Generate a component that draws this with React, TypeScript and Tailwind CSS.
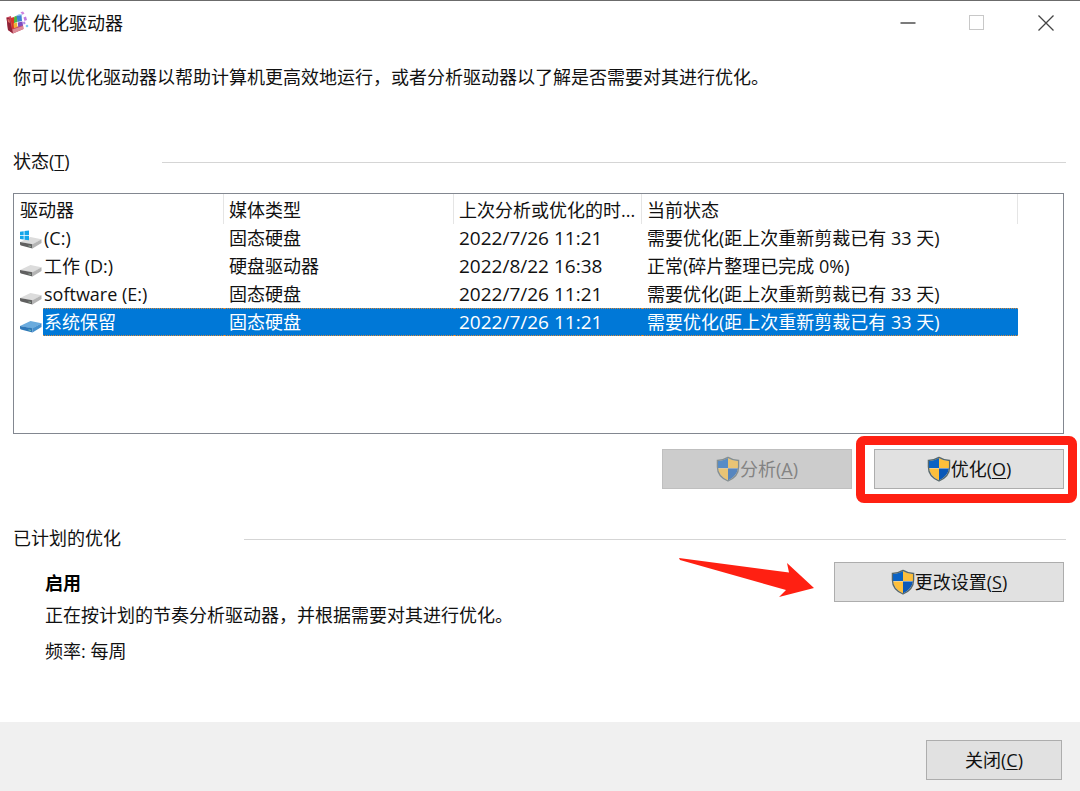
import { useState } from "react";
import type { ReactNode } from "react";

type DriveKind = "windows" | "plain" | "selected";

interface Drive {
  name: string;
  kind: DriveKind;
  media: string;
  lastRun: string;
  status: string;
}

const DRIVES: Drive[] = [
  { name: "(C:)", kind: "windows", media: "固态硬盘", lastRun: "2022/7/26 11:21", status: "需要优化(距上次重新剪裁已有 33 天)" },
  { name: "工作 (D:)", kind: "plain", media: "硬盘驱动器", lastRun: "2022/8/22 16:38", status: "正常(碎片整理已完成 0%)" },
  { name: "software (E:)", kind: "plain", media: "固态硬盘", lastRun: "2022/7/26 11:21", status: "需要优化(距上次重新剪裁已有 33 天)" },
  { name: "系统保留", kind: "plain", media: "固态硬盘", lastRun: "2022/7/26 11:21", status: "需要优化(距上次重新剪裁已有 33 天)" },
];

function AppIcon() {
  return (
    <svg width="23" height="24" viewBox="0 0 23 24" aria-hidden="true">
      <path d="M0.5 6.5 L5 5 L6 17 L17 14 L17.5 18 L7 22.5 L2 19 Z" fill="#c8475c" />
      <path d="M0.5 6.5 L3.5 7.5 L6.500 20 L7 22.500 L2 19 Z" fill="#8e2338" />
      <path d="M1.500 8 L3.500 8.500 L4 12 L2 11 Z" fill="#e0695f" />
      <path d="M4.500 7 L8 6 L8.500 17 L6 18 Z" fill="#d8352a" />
      <path d="M8 7 Q8 5 10 5 L11.500 5.500 V11 L8 12 Z" fill="#52b63f" />
      <path d="M10.500 4.500 L15.500 4 L16 10 L11.500 11 Z" fill="#3d82d2" />
      <path d="M10.500 4.500 L13 3 L16.500 3.200 L15.500 4.300 Z" fill="#a8d0f4" />
      <path d="M7.500 12.500 L11 11.500 L11.500 16 L8 17 Z" fill="#f0b236" />
      <path d="M11.800 11.500 L16.500 10.500 L17 14.500 L12.200 16 Z" fill="#7e4cc0" />
      <path d="M6.500 18.500 L17 15 L17.500 18 L7 22.500 Z" fill="#dc8c98" />
      <path d="M14.500 1.200 L17 0.600 L18.500 2.500 L16.500 3.800 Z" fill="#cf83df" />
      <path d="M17.500 6.500 L20 5.500 L21 9 L18.500 10 Z" fill="#c07be0" />
      <path d="M17 11 L19 10.500 L19.500 13 L17.500 13.500 Z" fill="#b28ae6" />
      <circle cx="21" cy="15" r="1.300" fill="#7cc8f0" />
    </svg>
  );
}

function DriveIcon({ kind }: { kind: DriveKind }) {
  const blue = kind === "selected";
  return (
    <svg width="22" height="22" viewBox="0 0 22 22" className="shrink-0" aria-hidden="true">
      <path d="M0 15 L10.500 10 L21.500 12.200 L12.500 17.500 Z" fill={blue ? "#6aabde" : "#dcdcdc"} />
      <path d="M0 15 L12.500 17.200 V21.500 L1 18.500 Q0 18 0 17 Z" fill={blue ? "#2f77b8" : "#606060"} />
      <path d="M12.500 17.200 L21.500 12.200 V16 L12.500 21.500 Z" fill={blue ? "#4690cd" : "#b4b4b4"} />
      <path d="M8.500 18.500 L11 19 V19.800 L8.500 19.300 Z" fill={blue ? "#82dcb0" : "#9dbaa5"} />
      {kind === "windows" && (
        <path
          d="M0 4.700 L3.700 4.200 V8 H0 Z M4.500 4.100 L9 3.500 V8 H4.500 Z M0 8.800 H3.700 V12.600 L0 12.100 Z M4.500 8.800 H9 V13.300 L4.500 12.700 Z"
          fill="#13a6ea"
        />
      )}
    </svg>
  );
}

function Shield() {
  return (
    <svg width="24" height="26" viewBox="0 0 24 26" className="shrink-0" aria-hidden="true">
      <path d="M12 2 Q7 5 2 5 V12 H12 Z" fill="#0a62c4" />
      <path d="M12 2 Q17 5 22 5 V12 H12 Z" fill="#fdbf3c" />
      <path d="M2 12.5 H12 V24.5 Q3 20 2 12.5 Z" fill="#fdbf3c" />
      <path d="M22 12.5 H12 V24.5 Q21 20 22 12.5 Z" fill="#0a58b8" />
      <path
        d="M12 1.4 Q7 4.5 1.4 4.5 V11 Q1.4 20.5 12 25 Q22.6 20.5 22.6 11 V4.5 Q17 4.5 12 1.4 Z"
        fill="none"
        stroke="#56676b"
        strokeWidth="1.3"
      />
    </svg>
  );
}

function DialogButton({
  label,
  hotkey,
  shield = false,
  disabled = false,
  size,
}: {
  label: string;
  hotkey: string;
  shield?: boolean;
  disabled?: boolean;
  size: string;
}) {
  return (
    <button
      type="button"
      disabled={disabled}
      className={`flex h-10 items-center justify-center border border-[#adadad] bg-[#e1e1e1] disabled:border-[#bfbfbf] disabled:bg-[#cccccc] disabled:text-[#838383] ${size}`}
    >
      {shield && (
        <span className={disabled ? "opacity-60" : ""}>
          <Shield />
        </span>
      )}
      <span>
        {label}(<u className="underline-offset-2">{hotkey}</u>)
      </span>
    </button>
  );
}

function SectionHeading({ children, size }: { children: ReactNode; size: string }) {
  return (
    <div className="flex items-center pl-[13px] pr-[14px]">
      <h2 className={`shrink-0 ${size}`}>{children}</h2>
      <div className="mt-0.5 h-px flex-1 bg-[#d5d5d5]" />
    </div>
  );
}

function TitleBar() {
  return (
    <header className="flex h-11 items-center">
      <div className="flex flex-1 items-center gap-1 pl-[6px]">
        <AppIcon />
        <h1>优化驱动器</h1>
      </div>
      <button type="button" aria-label="最小化" className="flex h-full w-[69px] items-center justify-center">
        <svg width="16" height="16" viewBox="0 0 16 16">
          <path d="M0.5 8 H15.5" stroke="#333" strokeWidth="1.3" />
        </svg>
      </button>
      <button type="button" aria-label="最大化" disabled className="flex h-full w-[69px] items-center justify-center">
        <svg width="16" height="16" viewBox="0 0 16 16">
          <rect x="0.5" y="0.5" width="14" height="14" fill="none" stroke="#c8c8c8" />
        </svg>
      </button>
      <button type="button" aria-label="关闭" className="flex h-full w-[69px] items-center justify-center">
        <svg width="16" height="16" viewBox="0 0 16 16">
          <path d="M0.5 0.5 L15.5 15.5 M15.5 0.5 L0.5 15.5" stroke="#444" strokeWidth="1.3" />
        </svg>
      </button>
    </header>
  );
}

function DriveTable() {
  const [selected, setSelected] = useState(3);
  return (
    <div className="ml-[13px] mr-4 h-[241px] overflow-hidden border border-[#828790]">
      <table className="w-full table-fixed border-separate border-spacing-0 whitespace-nowrap text-left">
        <colgroup>
          <col className="w-[210px]" />
          <col className="w-[230px]" />
          <col className="w-[188px]" />
          <col className="w-[376px]" />
          <col />
        </colgroup>
        <thead>
          <tr className="h-[30px]">
            <th className="border-r border-[#e5e5e5] p-0 pl-[6px] pt-0.5 font-normal">驱动器</th>
            <th className="border-r border-[#e5e5e5] p-0 pl-[5px] pt-0.5 font-normal">媒体类型</th>
            <th className="border-r border-[#e5e5e5] p-0 pl-[5px] pt-0.5 font-normal">上次分析或优化的时...</th>
            <th className="border-r border-[#e5e5e5] p-0 pl-[5px] pt-0.5 font-normal">当前状态</th>
            <td />
          </tr>
        </thead>
        <tbody>
          {DRIVES.map((drive, i) => {
            const active = i === selected;
            const cell = active
              ? "border-y border-dotted border-[#d98a3a] bg-[#0078d7] text-white"
              : "border-y border-transparent";
            return (
              <tr key={drive.name} className="h-7" onClick={() => setSelected(i)}>
                <td className="p-0">
                  <div className="flex h-7 items-center pl-[6px]">
                    <DriveIcon kind={active ? "selected" : drive.kind} />
                    <span className={`ml-px h-7 flex-1 pl-px leading-[26px] ${cell}`}>{drive.name}</span>
                  </div>
                </td>
                <td className={`p-0 pl-[5px] leading-[26px] ${cell}`}>{drive.media}</td>
                <td className={`p-0 pl-[5px] text-[19px] leading-[26px] ${cell}`}>{drive.lastRun}</td>
                <td className={`p-0 pl-[5px] leading-[26px] ${cell}`}>{drive.status}</td>
                <td className="p-0" />
              </tr>
            );
          })}
        </tbody>
      </table>
    </div>
  );
}

export default function App() {
  return (
    <div className="flex min-h-screen flex-col border-t border-[#6b6b6b] bg-white font-['Open_Sans','Noto_Sans_CJK_SC',sans-serif] text-[18px] leading-6 text-[#111]">
      <TitleBar />

      <main className="flex-1 pb-6">
        <p className="mb-[60px] mt-5 px-[13px]">
          你可以优化驱动器以帮助计算机更高效地运行，或者分析驱动器以了解是否需要对其进行优化。
        </p>

        <SectionHeading size="w-[149px]">
          状态(<u className="underline-offset-2">T</u>)
        </SectionHeading>
        <div className="mt-5">
          <DriveTable />
        </div>

        <div className="mr-4 mt-[15px] flex justify-end gap-[22px]">
          <DialogButton label="分析" hotkey="A" shield disabled size="w-[190px]" />
          <div className="relative">
            <DialogButton label="优化" hotkey="O" shield size="w-[190px]" />
            <div className="pointer-events-none absolute -bottom-[14px] -left-[18px] -right-[13px] -top-[13px] rounded-lg border-9 border-[#ff2012]" />
          </div>
        </div>

        <div className="mt-[37px]">
          <SectionHeading size="w-[231px]">已计划的优化</SectionHeading>
        </div>

        <div className="mr-4 flex items-start justify-between pl-[45px]">
          <div className="pt-[21px]">
            <p className="font-bold text-black">启用</p>
            <p className="mt-2">正在按计划的节奏分析驱动器，并根据需要对其进行优化。</p>
            <p className="mt-3">频率: 每周</p>
          </div>
          <div className="mt-2 flex items-end gap-[19px]">
            <svg width="136" height="44" viewBox="0 0 136 44" aria-hidden="true">
              <path d="M0 0 L110 14.5 L108 5 L135 30 L100 39 L107 32 L1 2 Z" fill="#ff2012" />
            </svg>
            <DialogButton label="更改设置" hotkey="S" shield size="w-[230px]" />
          </div>
        </div>
      </main>

      <footer className="flex h-[69px] items-start justify-end bg-[#f0f0f0] pr-[18px] pt-[18px]">
        <DialogButton label="关闭" hotkey="C" size="w-[136px]" />
      </footer>
    </div>
  );
}
